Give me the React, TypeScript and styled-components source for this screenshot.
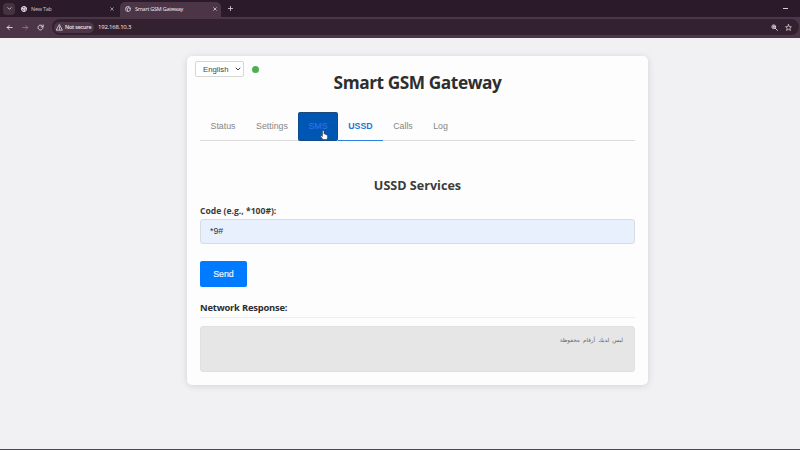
import React from 'react';
import styled, { createGlobalStyle, css } from 'styled-components';

const Global = createGlobalStyle`
  *, *::before, *::after { box-sizing: border-box; }
  html, body { margin: 0; padding: 0; overflow: hidden; }
  body { background: #f1f1f3; font-family: "Open Sans", "Noto Sans", sans-serif; color: #333; }
  svg { display: block; flex: none; }
`;

const Screen = styled.div`
  width: 800px;
  height: 450px;
  display: flex;
  flex-direction: column;
  background: #f1f1f3;
  border-bottom: 1px solid #4b4b50;
`;

const TabStrip = styled.div`
  height: 17px;
  flex: none;
  display: flex;
  align-items: center;
  background: #2b1a2a;
  padding-left: 3px;
  color: #d8ced7;
`;

const TabSearch = styled.div`
  width: 12px;
  height: 12px;
  border-radius: 4px;
  background: #47323f;
  display: grid;
  place-items: center;
`;

const BrowserTab = styled.div<{ $active?: boolean }>`
  display: flex;
  align-items: center;
  gap: 4px;
  height: 15px;
  margin-top: 2px;
  width: ${p => (p.$active ? 101 : 99)}px;
  margin-left: ${p => (p.$active ? 1 : 5)}px;
  padding: 0 ${p => (p.$active ? 4 : 5)}px 1px ${p => (p.$active ? 5 : 1)}px;
  border-radius: 5px 5px 0 0;
  background: ${p => (p.$active ? '#4b3546' : 'transparent')};
  color: ${p => (p.$active ? '#f4eef3' : '#cdc2cc')};
  font-size: 5.5px;
  letter-spacing: -0.25px;
  white-space: nowrap;
  svg:last-child { margin-left: auto; }
`;

const NewTab = styled.div`
  margin-left: 7px;
`;

const Minimize = styled.div`
  width: 5px;
  height: 1px;
  background: #d8ced7;
  margin-left: auto;
  margin-right: 12px;
`;

const Toolbar = styled.div`
  height: 21px;
  flex: none;
  display: flex;
  align-items: center;
  background: #4b3546;
  padding: 0 1px 1px 6px;
  color: #e4dae2;
`;

const NavIcons = styled.div`
  display: flex;
  gap: 8.5px;
  width: 46px;
`;

const AddressBar = styled.div`
  flex: 1;
  height: 16px;
  border-radius: 8px;
  background: #34212f;
  display: flex;
  align-items: center;
  padding: 0 7px 0 2px;
`;

const Security = styled.div`
  display: flex;
  align-items: center;
  gap: 2px;
  width: 40px;
  height: 11px;
  padding-left: 2px;
  border-radius: 6px;
  background: #4b3747;
  font-size: 5.4px;
  font-weight: 600;
  letter-spacing: -0.2px;
  white-space: nowrap;
  color: #f1eaf0;
`;

const Address = styled.span`
  margin-left: 4px;
  color: #f4eef3;
  font-size: 6px;
  letter-spacing: -0.2px;
`;

const AddressActions = styled.div`
  margin-left: auto;
  display: flex;
  gap: 7px;
`;

const Page = styled.main`
  flex: 1;
  padding: 18px 0 0 187px;
`;

const Card = styled.section`
  width: 461px;
  height: 329px;
  padding: 5px 13px 0;
  border-radius: 5px;
  background: #fdfdfd;
  box-shadow: 0 1px 7px rgba(0, 0, 0, 0.13);
`;

const StatusRow = styled.div`
  display: flex;
  align-items: center;
  gap: 8px;
  height: 16px;
  margin-left: -5px;
`;

const Language = styled.div`
  display: flex;
  align-items: center;
  justify-content: space-between;
  width: 49px;
  height: 16px;
  padding: 0 2px 0 7px;
  border: 1px solid #d6d6d6;
  border-radius: 2px;
  background: #fff;
  font: 7.8px "Liberation Sans", sans-serif;
  color: #444;
`;

const OnlineDot = styled.span`
  width: 7px;
  height: 7px;
  border-radius: 50%;
  background: #4caf50;
`;

const Title = styled.h1`
  margin: -6px 0 0;
  height: 24px;
  line-height: 24px;
  font-size: 17.3px;
  letter-spacing: -0.44px;
  font-weight: 700;
  text-align: center;
  color: #2e2e2e;
`;

const Tabs = styled.nav`
  display: flex;
  height: 29px;
  margin-top: 17px;
  border-bottom: 1px solid #dcdcdc;
`;

const Tab = styled.div<{ $width: number; $state?: 'hover' | 'active' }>`
  position: relative;
  width: ${p => p.$width}px;
  height: 29px;
  display: flex;
  align-items: center;
  justify-content: center;
  padding-bottom: 1px;
  border-bottom: 1px solid transparent;
  font: 8.8px "Liberation Sans", sans-serif;
  color: #858585;
  ${p => p.$state === 'hover' && css`
    background: #0056b3;
    border: 1px dotted #174477;
    border-radius: 2px;
    color: #2f6fe0;
    -webkit-text-stroke: 0.2px #2f6fe0;
  `}
  ${p => p.$state === 'active' && css`
    border-bottom-color: #2f83e0;
    font-weight: 700;
    color: #1f75d6;
  `}
`;

const Pointer = styled.svg`
  position: absolute;
  left: 21px;
  top: 17px;
`;

const SectionTitle = styled.h2`
  margin: 36px 0 0;
  height: 18px;
  line-height: 18px;
  font-size: 12.6px;
  font-weight: 700;
  text-align: center;
  color: #3b3b3b;
`;

const Label = styled.label`
  display: block;
  height: 12px;
  margin-top: 10px;
  line-height: 12px;
  font-size: 8.6px;
  font-weight: 700;
  color: #3b3b3b;
`;

const CodeField = styled.div`
  height: 25px;
  margin-top: 2px;
  padding: 0 9px;
  border: 1px solid #d8dce3;
  border-radius: 3px;
  background: #e8f0fe;
  font: 8.8px/23px "Liberation Sans", sans-serif;
  color: #333;
`;

const SendButton = styled.button`
  display: block;
  width: 47px;
  height: 26px;
  margin: 17px 0 0;
  padding: 0;
  border: 0;
  border-radius: 2px;
  background: #007bff;
  color: #e9f3ff;
  font: 8.8px "Liberation Sans", sans-serif;
  -webkit-text-stroke: 0.2px #e9f3ff;
`;

const ResponseTitle = styled.h3`
  margin: 13px 0 0;
  height: 18px;
  line-height: 15px;
  border-bottom: 1px solid #eee;
  font-size: 9.4px;
  letter-spacing: -0.2px;
  font-weight: 700;
  color: #2e2e2e;
`;

const Response = styled.div`
  height: 46px;
  margin-top: 8px;
  padding: 7px 11px;
  border: 1px solid #e0e0e0;
  border-radius: 3px;
  background: #e6e6e6;
  font: 5.7px/12px "DejaVu Sans", sans-serif;
  word-spacing: 1.2px;
  color: #666;
`;

const Glyph = ({ size, d, width = 2, dim }: { size: number; d: string; width?: number; dim?: boolean }) => (
  <svg width={size} height={size} viewBox="0 0 24 24" fill="none" stroke={dim ? '#8c7889' : 'currentColor'}
    strokeWidth={width} strokeLinecap="round" strokeLinejoin="round"><path d={d} /></svg>
);

const CLOSE = 'M4 4 20 20 M20 4 4 20';
const CHEVRON = 'M4 8 12 16 20 8';

const ChromeIcon = () => (
  <svg width="6" height="6" viewBox="0 0 24 24" fill="none" stroke="#eee4ec" strokeWidth="4">
    <circle cx="12" cy="12" r="10" /><circle cx="12" cy="12" r="4" />
    <path d="M12 8h9 M8.5 14 4 6 M15.5 14 11 22" />
  </svg>
);

const GlobeIcon = () => (
  <svg width="6" height="6" viewBox="0 0 24 24" fill="none" stroke="#d2dce0" strokeWidth="3">
    <circle cx="12" cy="12" r="10" />
    <path d="M4 6l7 5-2 5 3 5 M13 2v5l4 3h5" />
  </svg>
);

export default function App() {
  return (
    <>
      <Global />
      <Screen>
        <TabStrip>
          <TabSearch><Glyph size={5} d={CHEVRON} width={4} /></TabSearch>
          <BrowserTab><ChromeIcon />New Tab<Glyph size={4} d={CLOSE} width={4} /></BrowserTab>
          <BrowserTab $active><GlobeIcon />Smart GSM Gateway<Glyph size={4} d={CLOSE} width={4} /></BrowserTab>
          <NewTab><Glyph size={5} d="M12 2v20 M2 12h20" width={4} /></NewTab>
          <Minimize />
        </TabStrip>
        <Toolbar>
          <NavIcons>
            <Glyph size={7} d="M21 12H4 M11 5l-7 7 7 7" width={3.2} />
            <Glyph size={7} d="M3 12h17 M13 5l7 7-7 7" width={3} dim />
            <Glyph size={7} d="M20 9A8.5 8.5 0 1 0 20.5 13 M21 3v7h-7" width={3} />
          </NavIcons>
          <AddressBar>
            <Security>
              <Glyph size={7} d="M12 3 22 21H2Z M12 10v5 M12 18v.5" width={2.6} />
              Not secure
            </Security>
            <Address>192.168.10.3</Address>
            <AddressActions>
              <Glyph size={7} d="M16 9.500a6.500 6.500 0 1 1-13 0 6.500 6.500 0 0 1 13 0 M14.500 14.500 22 22 M6.500 9.500h6 M9.500 6.500v6" width={3} />
              <Glyph size={7} d="M12 2l3 7 7 .7-5.300 4.800L18.500 22 12 18l-6.500 4 1.800-7.500L2 9.700 9 9Z" width={2.5} />
            </AddressActions>
          </AddressBar>
        </Toolbar>
        <Page>
          <Card>
            <StatusRow>
              <Language>English<Glyph size={6} d={CHEVRON} width={4} /></Language>
              <OnlineDot />
            </StatusRow>
            <Title>Smart GSM Gateway</Title>
            <Tabs>
              <Tab $width={46}>Status</Tab>
              <Tab $width={52}>Settings</Tab>
              <Tab $width={40} $state="hover">
                SMS
                <Pointer width="8" height="10" viewBox="0 0 16 20">
                  <path d="M5 11V3q0-2 1.500-2T8 3v5q3-1 3 1 2-.7 2 1 2-.2 2 2v3q0 2-2 4H6q-1-2-4-5-1-2 0-3 1 0 3 2Z" fill="#fff" stroke="#333" strokeWidth="1" />
                </Pointer>
              </Tab>
              <Tab $width={45} $state="active">USSD</Tab>
              <Tab $width={40}>Calls</Tab>
              <Tab $width={35}>Log</Tab>
            </Tabs>
            <SectionTitle>USSD Services</SectionTitle>
            <Label>Code (e.g., *100#):</Label>
            <CodeField>*9#</CodeField>
            <SendButton>Send</SendButton>
            <ResponseTitle>Network Response:</ResponseTitle>
            <Response dir="rtl">ليس لديك أرقام محفوظة</Response>
          </Card>
        </Page>
      </Screen>
    </>
  );
}
